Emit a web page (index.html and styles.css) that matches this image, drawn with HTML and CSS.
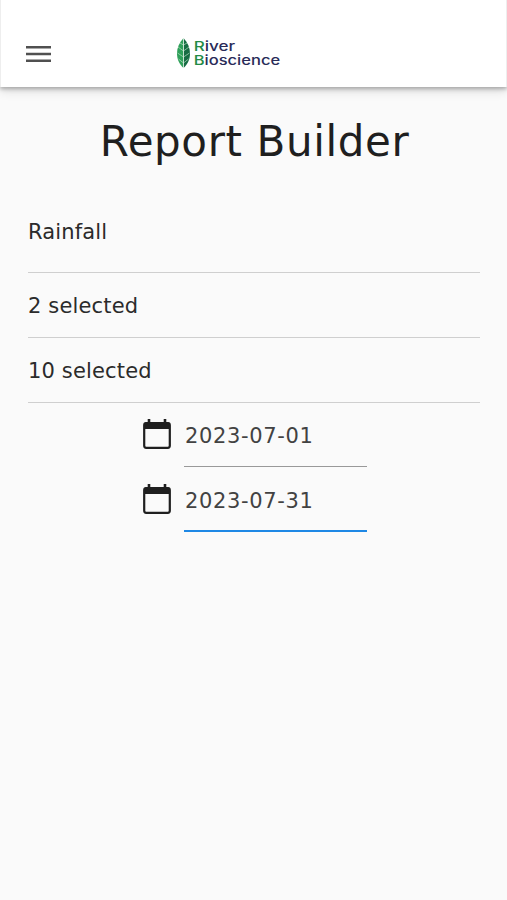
FILE: index.html
```html
<!DOCTYPE html>
<html lang="en">
<head>
<meta charset="utf-8">
<title>Report Builder</title>
<link rel="stylesheet" href="styles.css">
</head>
<body>
<header class="toolbar">
  <button class="menu" aria-label="Menu"><svg width="25" height="20" viewBox="0 0 25 20"><path d="M0 3.200H25M0 10H25M0 16.800H25" stroke="#505050" stroke-width="2.600"/></svg></button>
  <svg class="logo" width="108" height="34" viewBox="0 0 108 34" role="img">
    <path d="M7.500 1C3 6 1 11 1 16.500C1 22 3 27 7.500 31Z" fill="#2fa05a"/>
    <path d="M7.500 1C12 6 14 11 14 16.500C14 22 12 27 7.500 31Z" fill="#176b43"/>
    <path d="M7.500 8 4 6M7.500 14 2 10M7.500 20 1.500 16M7.500 26 2.500 22M7.500 8 11 6M7.500 14 13 10M7.500 20 13.500 16M7.500 26 12.500 22" stroke="#b5dfc2" stroke-width=".7"/>
    <path d="M7.500 1V31" stroke="#e4f3e9" stroke-width=".8"/>
    <text class="brand" x="17.700" y="13.500" textLength="41.500" lengthAdjust="spacingAndGlyphs"><tspan class="initial">R</tspan>iver</text>
    <text class="brand" x="17.700" y="28" textLength="86.500" lengthAdjust="spacingAndGlyphs"><tspan class="initial">B</tspan>ioscience</text>
  </svg>
</header>
<main class="content">
  <h1 class="title">Report Builder</h1>
  <div class="select first">Rainfall</div>
  <div class="select">2 selected</div>
  <div class="select">10 selected</div>
  <div class="dates">
    <div class="date-row">
      <svg class="calendar" width="28" height="31" viewBox="0 0 28 31"><path d="M4 3H24Q27 3 27 6V10H1V6Q1 3 4 3Z" fill="#1f1f1f"/><rect x="1.200" y="4.200" width="25.600" height="24.600" rx="2" fill="none" stroke="#1f1f1f" stroke-width="2.200"/><path d="M6 0V5M22 0V5" stroke="#1f1f1f" stroke-width="2.600"/></svg>
      <div class="date">2023-07-01</div>
    </div>
    <div class="date-row end">
      <svg class="calendar" width="28" height="31" viewBox="0 0 28 31"><path d="M4 3H24Q27 3 27 6V10H1V6Q1 3 4 3Z" fill="#1f1f1f"/><rect x="1.200" y="4.200" width="25.600" height="24.600" rx="2" fill="none" stroke="#1f1f1f" stroke-width="2.200"/><path d="M6 0V5M22 0V5" stroke="#1f1f1f" stroke-width="2.600"/></svg>
      <div class="date">2023-07-31</div>
    </div>
  </div>
</main>
</body>
</html>
```
FILE: styles.css
```css
* { box-sizing: border-box; }
body {
  margin: 0;
  min-height: 900px;
  background: #fafafa;
  color: #2b2b2b;
  font-family: Verdana, "DejaVu Sans", sans-serif;
}
.toolbar {
  display: flex;
  align-items: flex-start;
  height: 87px;
  padding: 37px 25px 0;
  background: #fff;
  border-left: 1px solid #eee;
  border-right: 1px solid #eee;
  box-shadow: 0 2px 4px rgba(0, 0, 0, .27), 0 4px 10px rgba(0, 0, 0, .12);
}
.menu {
  display: flex;
  width: 25px;
  margin: 7px 0 0;
  padding: 0;
  border: 0;
  background: none;
}
.logo { margin-left: 125px; }
.brand { font: 500 13px Inter, sans-serif; fill: #292b58; }
.initial { fill: #238b45; }
.content { padding: 25px 27px 0 28px; }
.title {
  margin: 0;
  height: 60px;
  line-height: 60px;
  padding-left: 1px;
  font-size: 42px;
  font-weight: 400;
  letter-spacing: .6px;
  color: #1f1f1f;
  text-align: center;
}
.select {
  height: 65px;
  line-height: 66px;
  font-size: 21px;
  letter-spacing: .15px;
  border-bottom: 1px solid #cfcfcf;
}
.first { height: 101px; line-height: 120px; }
.dates { display: flex; flex-direction: column; align-items: center; }
.date-row { display: flex; width: 224px; gap: 13px; margin-left: 2px; }
.calendar { margin-top: 16px; }
.date {
  width: 183px;
  height: 64px;
  padding-left: 1px;
  line-height: 66px;
  font-size: 21px;
  letter-spacing: .65px;
  color: #424242;
  border-bottom: 1px solid #999;
}
.end .calendar { margin-top: 17px; }
.end .date {
  height: 65px;
  line-height: 68px;
  border-bottom: 2px solid #1e88e5;
}
```
